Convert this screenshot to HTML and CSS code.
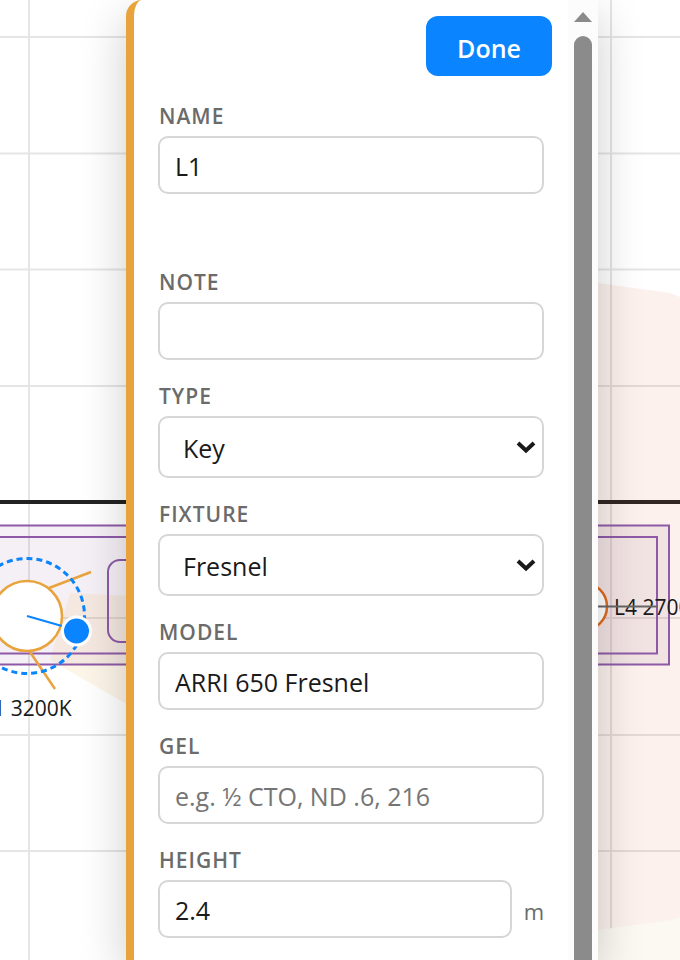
FILE: index.html
```html
<!DOCTYPE html>
<html lang="en">
<head>
<meta charset="utf-8">
<meta name="viewport" content="width=device-width, initial-scale=1">
<title>Lighting plan</title>
<link rel="stylesheet" href="styles.css">
</head>
<body>
<main class="stage">
  <svg class="plan" viewBox="0 0 680 960" preserveAspectRatio="xMidYMin slice" role="img" aria-label="Lighting plan">
    <path class="grid" d="M29 0V960M611 0V960M0 37H680M0 153.500H680M0 269.500H680M0 386H680M0 618H680M0 735H680M0 851H680"/>
    <rect class="sofa-fill" x="-20" y="525" width="689" height="140"/>
    <path class="wall" d="M0 502H680"/>
    <path class="beam-warm" d="M70 593L130 596V706L50 660Z"/>
    <path class="beam-pale" d="M560 936L598 930L671 920L680 917V960H560Z"/>
    <path class="beam-pink" d="M560 278L598 283L670 293L680 297V917L671 920L598 930L560 936Z"/>
    <g class="sofa">
      <rect x="-20" y="525.500" width="689" height="139"/>
      <rect x="-20" y="537" width="677" height="116.500"/>
      <rect x="108" y="560" width="120" height="82" rx="12"/>
    </g>
    <circle class="lamp" cx="27" cy="616" r="35"/>
    <path class="lamp" d="M49 588L91 572M30 652L55 689"/>
    <circle class="ring" cx="27" cy="616" r="57.500"/>
    <path class="aim" d="M27 616L62 626"/>
    <circle class="knob" cx="76.500" cy="631" r="14"/>
    <circle class="lamp-red" cx="583" cy="606.500" r="24"/>
    <text class="tag" x="27" y="716" text-anchor="middle">L1 3200K</text>
    <text class="tag" x="614" y="615">L4 2700K</text>
    <path class="beam-line" d="M583 606.500H658"/>
  </svg>

  <aside class="panel">
    <form class="form">
      <div class="actions"><button class="done" type="button">Done</button></div>
      <div class="fields">
        <div class="field spaced">
          <label for="name">Name</label>
          <input id="name" type="text" value="L1">
        </div>
        <div class="field">
          <label for="note">Note</label>
          <input id="note" type="text">
        </div>
        <div class="field">
          <label for="type">Type</label>
          <div class="select">
            <select id="type"><option>Key</option><option>Fill</option><option>Back</option></select>
            <svg viewBox="0 0 20 14" aria-hidden="true"><path d="M2 3L10 10.500L18 3"/></svg>
          </div>
        </div>
        <div class="field">
          <label for="fixture">Fixture</label>
          <div class="select">
            <select id="fixture"><option>Fresnel</option><option>Panel</option></select>
            <svg viewBox="0 0 20 14" aria-hidden="true"><path d="M2 3L10 10.500L18 3"/></svg>
          </div>
        </div>
        <div class="field">
          <label for="model">Model</label>
          <input id="model" type="text" value="ARRI 650 Fresnel">
        </div>
        <div class="field">
          <label for="gel">Gel</label>
          <input id="gel" type="text" placeholder="e.g. ½ CTO, ND .6, 216">
        </div>
        <div class="field">
          <label for="height">Height</label>
          <div class="measure"><input id="height" type="text" value="2.4"><span>m</span></div>
        </div>
      </div>
    </form>
    <div class="scrollbar" aria-hidden="true">
      <svg viewBox="0 0 18 10"><path d="M9 0L18 10H0Z"/></svg>
      <div class="thumb"></div>
    </div>
  </aside>
</main>
</body>
</html>
```
FILE: styles.css
```css
* { box-sizing: border-box; }

body {
  margin: 0;
  background: #fff;
  color: #1a1a1a;
  font-family: "Open Sans", "Noto Sans", sans-serif;
  font-size: 25px;
}

.stage {
  position: relative;
  display: flex;
  height: 100vh;
  padding: 0 82px 0 126px;
  overflow: hidden;
}

/* Plan drawing behind the panel */
.plan { position: absolute; inset: 0; width: 100%; height: 100%; }
.grid { fill: none; stroke: #e5e5e5; stroke-width: 2; }
.wall { stroke: #222; stroke-width: 4; }
.beam-warm { fill: #f0b050; fill-opacity: .13; }
.beam-pale { fill: #fbf9f1; }
.beam-pink { fill: #e0602a; fill-opacity: .09; }
.sofa-fill { fill: #8e5a9e; fill-opacity: .09; }
.sofa { fill: none; stroke: #8e5aa8; stroke-width: 2; }
.lamp { fill: #fff; stroke: #e8a33d; stroke-width: 2.500; }
.lamp-red { fill: #fff; stroke: #dd6b20; stroke-width: 2.500; }
.ring { fill: none; stroke: #0a84ff; stroke-width: 3; stroke-dasharray: 6 4; }
.aim { stroke: #0a84ff; stroke-width: 2; }
.knob { fill: #0a84ff; stroke: #fff; stroke-width: 3; }
.tag { fill: #1a1a1a; font-size: 21px; }
.beam-line { stroke: #666; stroke-width: 2; }

.panel {
  position: relative;
  display: flex;
  flex: 1;
  min-width: 0;
  border-left: 8px solid #e8a33d;
  border-radius: 16px 0 0 0;
  background: #fff;
  box-shadow: 0 16px 48px rgba(0, 0, 0, .2);
}

.form { flex: 1; min-width: 0; padding: 16px 16px 0 24px; }
.actions { display: flex; justify-content: flex-end; }
.done {
  width: 126px;
  height: 60px;
  padding: 4px 0 0;
  border: 0;
  border-radius: 12px;
  background: #0a84ff;
  color: #fff;
  font: 600 25px/56px "Open Sans", "Noto Sans", sans-serif;
}

.fields { display: flex; flex-direction: column; gap: 20px; padding: 25px 8px 0 0; }
.field { display: flex; flex-direction: column; gap: 5px; }
.field + .field { padding-top: 1px; }
.spaced { margin-bottom: 52px; }

label {
  padding-left: 1px;
  color: #6b6b6b;
  font-size: 21px;
  font-weight: 600;
  line-height: 30px;
  letter-spacing: 1px;
  text-transform: uppercase;
}

input, select {
  width: 100%;
  min-width: 0;
  border: 2px solid #d6d6d6;
  border-radius: 10px;
  background: #fff;
  color: #1a1a1a;
  font: inherit;
}
input { height: 58px; padding: 2px 15px 0; }
input::placeholder { color: #757575; }

.select { display: flex; position: relative; }
select { height: 62px; padding: 2px 48px 0 23px; appearance: none; }
.select svg {
  position: absolute;
  top: 24px;
  right: 8px;
  width: 20px;
  height: 14px;
  fill: none;
  stroke: #1a1a1a;
  stroke-width: 4;
  pointer-events: none;
}

.measure { display: flex; align-items: center; gap: 12px; }
.measure input { flex: 1; }
.measure span { padding-top: 4px; color: #6b6b6b; font-size: 22px; }

.scrollbar {
  display: flex;
  flex-direction: column;
  align-items: center;
  gap: 14px;
  width: 30px;
  padding: 12px 6px 0;
  background: #fcfcfc;
}
.scrollbar svg { flex: none; width: 18px; height: 10px; fill: #8b8b8b; }
.thumb { flex: 1; width: 18px; border-radius: 9px 9px 0 0; background: #8b8b8b; }
```
